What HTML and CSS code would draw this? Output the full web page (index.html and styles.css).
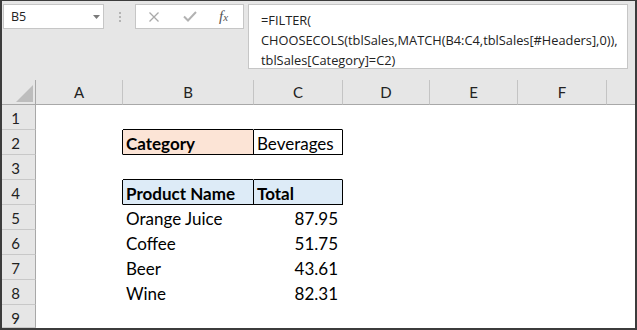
FILE: index.html
```html
<!DOCTYPE html>
<html>
<head>
<meta charset="utf-8">
<link rel="stylesheet" href="styles.css">
</head>
<body>
<div class="frame">
  <div class="fbar">
    <div class="namebox">
      <span class="nb-text">B5</span>
      <svg class="nb-arrow" width="7" height="4" viewBox="0 0 7 4"><polygon points="0,0 7,0 3.5,4" fill="#7a7a7a"/></svg>
    </div>
    <div class="dots"><i></i><i></i><i></i></div>
    <div class="btns">
      <svg class="ico-x" width="12" height="12" viewBox="0 0 12 12"><path d="M1.5 1.5 L10.5 10.5 M10.5 1.5 L1.5 10.5" stroke="#a9a9a9" stroke-width="1.3" fill="none"/></svg>
      <svg class="ico-ok" width="14" height="11" viewBox="0 0 14 11"><path d="M1 5.5 L5 9.5 L13 1" stroke="#b2b2b2" stroke-width="2" fill="none"/></svg>
      <span class="fx"><i class="fx-f">f</i><i class="fx-x">x</i></span>
    </div>
    <div class="formula">=FILTER(<br>CHOOSECOLS(tblSales,MATCH(B4:C4,tblSales[#Headers],0)),<br>tblSales[Category]=C2)</div>
  </div>
  <div class="grid">
    <div class="ch corner"><svg width="17" height="17" viewBox="0 0 17 17"><polygon points="17,0 17,17 0,17" fill="#bdbdbd"/></svg></div>
    <div class="ch">A</div><div class="ch">B</div><div class="ch">C</div><div class="ch">D</div><div class="ch">E</div><div class="ch">F</div><div class="ch last"></div>

    <div class="rh">1</div><div class="c"></div><div class="c bb"></div><div class="c bb"></div><div class="c"></div><div class="c"></div><div class="c"></div><div class="c"></div>

    <div class="rh">2</div><div class="c br"></div><div class="c b cat br bb">Category</div><div class="c br bb">Beverages</div><div class="c"></div><div class="c"></div><div class="c"></div><div class="c"></div>

    <div class="rh">3</div><div class="c"></div><div class="c bb"></div><div class="c bb"></div><div class="c"></div><div class="c"></div><div class="c"></div><div class="c"></div>

    <div class="rh">4</div><div class="c br"></div><div class="c b hd br bb">Product Name</div><div class="c b hd br bb">Total</div><div class="c"></div><div class="c"></div><div class="c"></div><div class="c"></div>

    <div class="rh">5</div><div class="c"></div><div class="c">Orange Juice</div><div class="c num">87.95</div><div class="c"></div><div class="c"></div><div class="c"></div><div class="c"></div>

    <div class="rh">6</div><div class="c"></div><div class="c">Coffee</div><div class="c num">51.75</div><div class="c"></div><div class="c"></div><div class="c"></div><div class="c"></div>

    <div class="rh">7</div><div class="c"></div><div class="c">Beer</div><div class="c num">43.61</div><div class="c"></div><div class="c"></div><div class="c"></div><div class="c"></div>

    <div class="rh">8</div><div class="c"></div><div class="c">Wine</div><div class="c num">82.31</div><div class="c"></div><div class="c"></div><div class="c"></div><div class="c"></div>

    <div class="rh">9</div><div class="c"></div><div class="c"></div><div class="c"></div><div class="c"></div><div class="c"></div><div class="c"></div><div class="c"></div>
  </div>
</div>
</body>
</html>
```
FILE: styles.css
```css
* { box-sizing: border-box; }
body { margin: 0; }

.frame {
  width: 637px;
  height: 330px;
  border: 2px solid #3c3c3c;
  border-top-width: 1px;
  background: #e6e6e6;
  display: flex;
  flex-direction: column;
  overflow: hidden;
}

.fbar {
  height: 79px;
  flex: none;
  display: flex;
  align-items: flex-start;
  padding: 3px 0 0 1px;
}

.namebox {
  width: 101px;
  height: 25px;
  background: #fff;
  border: 1px solid #c6c6c6;
  display: flex;
  align-items: center;
  justify-content: space-between;
  padding: 0 3px 0 7px;
  font: 12.5px "Open Sans", sans-serif;
  color: #222;
}

.dots {
  width: 31px;
  height: 25px;
  display: flex;
  flex-direction: column;
  align-items: center;
  justify-content: center;
  gap: 2px;
}
.dots i {
  display: block;
  width: 2px;
  height: 2px;
  background: #b4b4b4;
}

.btns {
  width: 109px;
  height: 25px;
  background: #fff;
  border: 1px solid #c6c6c6;
  display: flex;
  align-items: center;
  padding-left: 12px;
}
.ico-ok { margin-left: 23px; }
.fx {
  margin-left: 22px;
  font-family: "Liberation Serif", serif;
  color: #555;
  display: flex;
  align-items: baseline;
}
.fx-f { font-size: 15px; }
.fx-x { font-size: 11px; margin-left: 0; }

.formula {
  margin-left: 4px;
  width: 380px;
  height: 65px;
  background: #fff;
  border: 1px solid #c6c6c6;
  padding: 5px 0 0 12px;
  font: 12.8px/20px "Open Sans", sans-serif;
  color: #222;
  white-space: nowrap;
  overflow: hidden;
}

.grid {
  flex: 1;
  display: grid;
  grid-template-columns: 34px 87px 131px 89px 87px 88px 89px 28px;
  grid-template-rows: repeat(9, 25px) 23px;
  background: #fff;
}

.ch {
  background: #e6e6e6;
  border-right: 1px solid #c4c4c4;
  border-bottom: 1px solid #a8a8a8;
  font: 15px/24px Lato, sans-serif;
  color: #222;
  text-align: center;
}
.ch.last { border-right: none; }
.corner {
  border-right-color: #a8a8a8;
  display: flex;
  align-items: flex-end;
  justify-content: flex-end;
  padding: 0 2px 2px 0;
}
.corner svg { display: block; }

.rh {
  background: #e6e6e6;
  border-right: 1px solid #a8a8a8;
  border-bottom: 1px solid #c8c8c8;
  font: 15px/24px Lato, sans-serif;
  color: #222;
  text-align: center;
  padding: 1px 6px 0 0;
}

.c {
  border-right: 1px solid transparent;
  border-bottom: 1px solid transparent;
  font: 17px/20px Lato, sans-serif;
  color: #000;
  display: flex;
  align-items: flex-end;
  padding: 0 4px 0 3px;
  white-space: nowrap;
}
.num { justify-content: flex-end; }
.b { font-weight: bold; }
.cat { background: #fce4d6; }
.hd { background: #ddebf7; }
.br { border-right-color: #000; }
.bb { border-bottom-color: #000; }
```
